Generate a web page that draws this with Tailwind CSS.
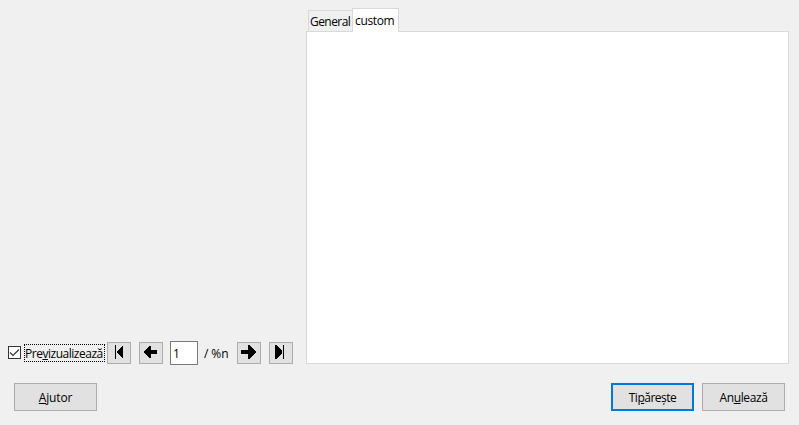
<!DOCTYPE html>
<html lang="ro">
<head>
<meta charset="utf-8">
<title>Tipărește</title>
<script src="https://cdn.jsdelivr.net/npm/@tailwindcss/browser@4"></script>
</head>
<body class="h-[425px] w-[799px] overflow-hidden bg-[#f0f0f0] font-['Open_Sans','Noto_Sans',sans-serif] text-[12px] leading-4 text-black">
<main class="flex h-full flex-col">
  <div class="flex h-[365px] shrink-0">
    <section class="flex w-[306px] items-end pl-2">
      <div class="flex h-6 items-center">
        <label class="flex w-[97px] items-center gap-[3px]">
          <span class="mb-px flex size-[13px] shrink-0 items-center justify-center border border-[#333] bg-white">
            <svg class="size-[11px]" viewBox="0 0 11 11" fill="none" stroke="#333" stroke-width="1.2"><path d="M1 5.5 4 8.5 10 2.5"/></svg>
          </span>
          <span class="flex h-[18px] w-[81px] items-center border border-dotted border-black pt-[2px] whitespace-nowrap"><span class="tracking-[-0.48px]">Pre<u>v</u>izualizează</span></span>
        </label>
        <button class="ml-[2px] h-[22px] w-6 border border-[#adadad] bg-[#e1e1e1]" aria-label="Prima pagină">
          <svg class="h-5 w-[22px]" viewBox="0 0 22 20" shape-rendering="crispEdges"><path d="M7 2h1v14H7zM15 3v12h-1L9 10V8l5-5z"/></svg>
        </button>
        <button class="ml-2 h-[22px] w-6 border border-[#adadad] bg-[#e1e1e1]" aria-label="Pagina anterioară">
          <svg class="h-5 w-[22px]" viewBox="0 0 22 20" shape-rendering="crispEdges"><path d="M4 8.5 10 3h1v4h6v4h-6v4h-1L4 9.5z"/></svg>
        </button>
        <div class="ml-[7px] flex h-6 w-7 items-center border border-[#7a7a7a] bg-white pt-[2px] pl-[2px]">1</div>
        <span class="ml-[6px] w-[33px] pt-[2px] whitespace-nowrap tracking-[-0.1px]">/ %n</span>
        <button class="h-[22px] w-6 border border-[#adadad] bg-[#e1e1e1]" aria-label="Pagina următoare">
          <svg class="h-5 w-[22px]" viewBox="0 0 22 20" shape-rendering="crispEdges"><path d="M3 7h7V2h1l7 7-7 7h-1v-5H3z"/></svg>
        </button>
        <button class="ml-2 h-[22px] w-6 border border-[#adadad] bg-[#e1e1e1]" aria-label="Ultima pagină">
          <svg class="h-5 w-[22px]" viewBox="0 0 22 20" shape-rendering="crispEdges"><path d="M5 2h1l6 6v2l-6 6H5zM13 2h1v14h-1z"/></svg>
        </button>
      </div>
    </section>
    <section class="flex w-[483px] flex-col pt-2 pb-px">
      <div class="z-10 -mb-px flex h-6 shrink-0 items-end pl-[2px]">
        <div class="mb-px flex h-[21px] w-11 items-center border border-r-0 border-b-0 border-[#d9d9d9] pt-[2px] pl-px"><span class="tracking-[-0.55px]">General</span></div>
        <div class="flex h-6 w-[47px] items-center border border-b-0 border-[#d9d9d9] bg-white pt-px pl-[2px]"><span class="tracking-[-0.35px]">custom</span></div>
      </div>
      <div class="flex-1 border border-[#d9d9d9] bg-white"></div>
    </section>
  </div>
  <footer class="flex items-center pt-[18px] pr-[14px] pl-[14px]">
    <button class="h-7 w-[83px] border border-[#adadad] bg-[#e1e1e1] pt-[2px] tracking-[-0.15px]"><u>A</u>jutor</button>
    <button class="ml-auto h-7 w-[83px] border-2 border-[#0078d7] bg-[#e1e1e1] pt-[2px] tracking-[-0.5px]">Ti<u>p</u>ărește</button>
    <button class="ml-2 h-7 w-[83px] border border-[#adadad] bg-[#e1e1e1] pt-[2px] tracking-[-0.4px]">An<u>u</u>lează</button>
  </footer>
</main>
</body>
</html>
